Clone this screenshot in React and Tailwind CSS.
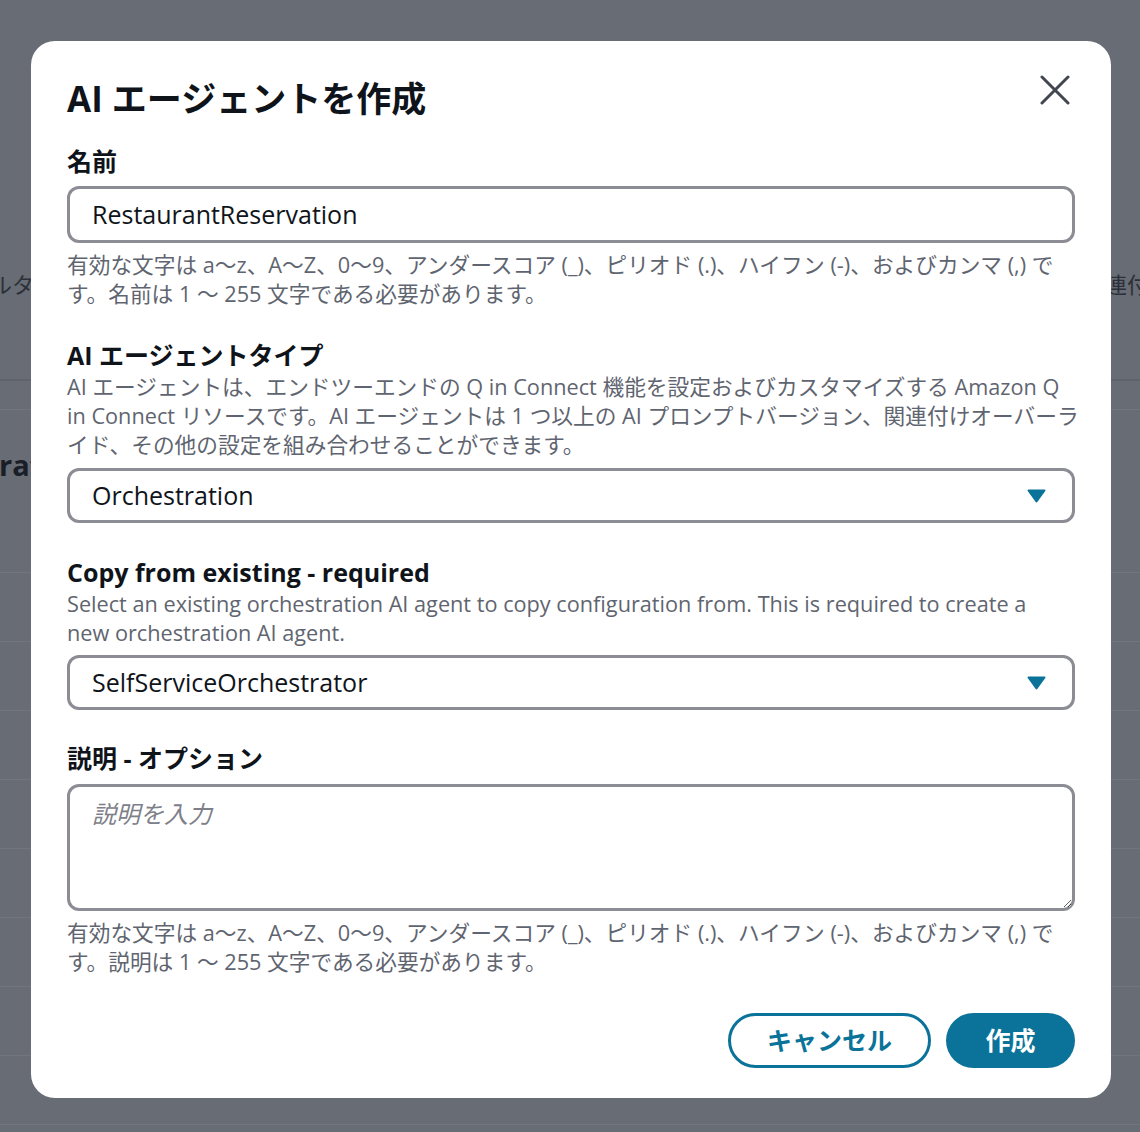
import React from "react";

const font = { fontFamily: '"Open Sans", "Noto Sans CJK JP", sans-serif' };

function Caret() {
  return (
    <svg width="19" height="14" viewBox="0 0 19 14" className="shrink-0">
      <path d="M1.5 1.5 H17.5 L9.5 12.5 Z" fill="#0b7399" stroke="#0b7399" strokeWidth="2" strokeLinejoin="round" />
    </svg>
  );
}

function Select({ value }) {
  return (
    <div className="h-[55px] rounded-[12px] border-[3px] border-[#8c8c94] pl-[22px] pr-[26px] flex items-center justify-between">
      <span className="text-[25px] text-[#0f141a]">{value}</span>
      <Caret />
    </div>
  );
}

// description text, broken where the screen breaks it
function Help({ lines, className = "" }) {
  return (
    <p className={"text-[21.7px] leading-[29px] text-[#5f6570] " + className}>
      {lines.map((l, i) => (
        <span key={i} className="block whitespace-nowrap">{l}</span>
      ))}
    </p>
  );
}

export default function App() {
  // background page rows under the overlay
  const rows = [0, 1, 2, 3, 4, 5, 6, 7];

  return (
    <div className="relative w-[1140px] h-[1132px] overflow-hidden bg-[#686c75]" style={font}>
      {/* ---- dimmed page behind modal ---- */}
      <div className="flex flex-col">
        <div className="h-[268px]" />
        <div className="flex items-center h-[32px] text-[22px] text-[#2c3038] whitespace-nowrap">
          <span className="w-[1115px] shrink-0 -ml-[10px]">ルタ</span>
          <span className="shrink-0">連付</span>
        </div>
        <div className="h-[81px] border-b-2 border-[#5f636b]" />
        <div className="h-[29px] border-b border-[#71757d]" />
        <div className="h-[110px] flex items-center text-[29px] font-bold text-[#1a1e27] -ml-[1px]">rat</div>
        <div className="h-[53px] border-b border-[#71757d]" />
        {rows.map((r) => (
          <div key={r} className="h-[69px] border-b border-[#71757d]" />
        ))}
      </div>

      {/* ---- modal ---- */}
      <div className="absolute inset-0 pt-[41px] pl-[31px]">
        <div className="w-[1080px] h-[1057px] bg-white rounded-[24px] pt-[34px] pl-[36px] pr-[36px] pb-[30px] flex flex-col">
          <div className="flex items-start justify-between">
            <h1 className="text-[35px] leading-[48px] font-bold text-[#0f141a]">AI エージェントを作成</h1>
            <button className="-mt-[1px] mr-[4px] w-[32px] h-[32px] flex items-center justify-center">
              <svg width="30" height="30" viewBox="0 0 30 30">
                <path d="M2 2 L28 28 M28 2 L2 28" stroke="#424650" strokeWidth="3" strokeLinecap="round" />
              </svg>
            </button>
          </div>

          {/* 名前 */}
          <label className="mt-[22px] text-[25px] leading-[32px] font-bold text-[#0f141a]">名前</label>
          <div className="mt-[9px] h-[57px] rounded-[12px] border-[3px] border-[#8c8c94] pl-[22px] flex items-center">
            <span className="text-[25px] text-[#0f141a]">RestaurantReservation</span>
          </div>
          <Help
            className="mt-[7px]"
            lines={[
              "有効な文字は a〜z、A〜Z、0〜9、アンダースコア (_)、ピリオド (.)、ハイフン (-)、およびカンマ (,) で",
              "す。名前は 1 〜 255 文字である必要があります。",
            ]}
          />

          {/* AI エージェントタイプ */}
          <label className="mt-[31px] text-[25px] leading-[32px] font-bold text-[#0f141a]">AI エージェントタイプ</label>
          <Help
            className="mt-[1px]"
            lines={[
              "AI エージェントは、エンドツーエンドの Q in Connect 機能を設定およびカスタマイズする Amazon Q",
              "in Connect リソースです。AI エージェントは 1 つ以上の AI プロンプトバージョン、関連付けオーバーラ",
              "イド、その他の設定を組み合わせることができます。",
            ]}
          />
          <div className="mt-[9px]">
            <Select value="Orchestration" />
          </div>

          {/* Copy from existing */}
          <label className="mt-[33px] text-[25px] leading-[32px] font-bold text-[#0f141a]">Copy from existing - required</label>
          <Help
            className="mt-[1px]"
            lines={[
              "Select an existing orchestration AI agent to copy configuration from. This is required to create a",
              "new orchestration AI agent.",
            ]}
          />
          <div className="mt-[8px]">
            <Select value="SelfServiceOrchestrator" />
          </div>

          {/* 説明 */}
          <label className="mt-[32px] text-[25px] leading-[32px] font-bold text-[#0f141a]">説明 - オプション</label>
          <textarea
            className="mt-[10px] h-[127px] w-full rounded-[12px] border-[3px] border-[#8c8c94] pl-[22px] pt-[10px] text-[24px] leading-[34px] text-[#0f141a] placeholder:italic placeholder:text-[#7d8089] outline-none resize-y"
            style={font}
            placeholder="説明を入力"
          />
          <Help
            className="mt-[7px]"
            lines={[
              "有効な文字は a〜z、A〜Z、0〜9、アンダースコア (_)、ピリオド (.)、ハイフン (-)、およびカンマ (,) で",
              "す。説明は 1 〜 255 文字である必要があります。",
            ]}
          />

          <div className="mt-auto flex justify-end gap-[15px]">
            <button className="w-[203px] h-[55px] rounded-full border-[3px] border-[#0b7399] text-[#0b7399] text-[25px] font-bold">
              キャンセル
            </button>
            <button className="w-[129px] h-[55px] rounded-full bg-[#0b7399] text-white text-[25px] font-bold">
              作成
            </button>
          </div>
        </div>
      </div>
    </div>
  );
}
